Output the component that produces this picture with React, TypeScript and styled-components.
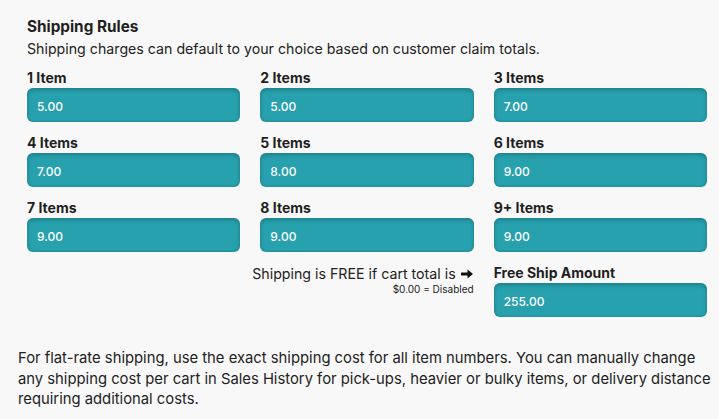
import * as React from "react";
import styled, { createGlobalStyle } from "styled-components";

const GlobalStyle = createGlobalStyle`
  html, body {
    margin: 0;
    padding: 0;
    background: #f8f8f8;
  }
  body {
    font-family: "Inter", "Noto Sans", sans-serif;
    color: #222;
  }
`;

const Page = styled.div`
  width: 719px;
  height: 419px;
  box-sizing: border-box;
  padding: 17px 0 0 18px;
  background: #f8f8f8;
  overflow: hidden;
`;

const Section = styled.section`
  padding-left: 9px;
`;

const Title = styled.h2`
  margin: 0;
  font-size: 15.3px;
  font-weight: 700;
  line-height: 20px;
  color: #1f1f1f;
`;

const Subtitle = styled.p`
  margin: 2px 0 0;
  font-size: 14.2px;
  line-height: 20px;
  color: #222;
`;

const Grid = styled.div`
  width: 680px;
  margin-top: 10px;
  display: grid;
  grid-template-columns: repeat(3, minmax(0, 1fr));
  column-gap: 20px;
  row-gap: 12px;
`;

const Field = styled.div`
  display: flex;
  flex-direction: column;
`;

const FieldLabel = styled.label`
  font-size: 14px;
  font-weight: 700;
  line-height: 18px;
  margin-bottom: 1px;
  color: #1f1f1f;
`;

const AmountInput = styled.input`
  box-sizing: border-box;
  height: 34px;
  width: 100%;
  border: none;
  border-radius: 6px;
  padding: 2px 10px 0;
  background: #27a1ae;
  box-shadow: inset 0 2px 4px rgba(0, 0, 0, 0.22), inset 0 -1px 2px rgba(0, 0, 0, 0.08);
  color: #fff;
  font-family: "Inter", "Noto Sans", sans-serif;
  font-size: 12px;
  font-weight: 500;
  outline: none;
`;

const FreeNote = styled.div`
  grid-column: 2;
  display: flex;
  flex-direction: column;
  align-items: flex-end;
  padding-top: 1px;
`;

const FreeLine = styled.span`
  font-size: 14.2px;
  line-height: 18px;
  color: #222;
  white-space: nowrap;
  display: flex;
  align-items: center;
  gap: 4px;
`;

const FreeHint = styled.span`
  font-size: 10px;
  line-height: 13px;
  color: #222;
  white-space: nowrap;
`;

const Footer = styled.p`
  margin: 31px 0 0;
  width: 700px;
  font-size: 14.8px;
  line-height: 20.5px;
  color: #222;
`;

const Arrow = () => (
  <svg width="14" height="12" viewBox="0 0 14 12" aria-hidden="true">
    <path d="M1 4.5h6.5V1.5L13 6l-5.5 4.5V7.5H1z" fill="#111" />
  </svg>
);

const fields = [
  { label: "1 Item", value: "5.00" },
  { label: "2 Items", value: "5.00" },
  { label: "3 Items", value: "7.00" },
  { label: "4 Items", value: "7.00" },
  { label: "5 Items", value: "8.00" },
  { label: "6 Items", value: "9.00" },
  { label: "7 Items", value: "9.00" },
  { label: "8 Items", value: "9.00" },
  { label: "9+ Items", value: "9.00" },
];

export default function App() {
  return (
    <Page>
      <GlobalStyle />
      <Section>
        <Title>Shipping Rules</Title>
        <Subtitle>Shipping charges can default to your choice based on customer claim totals.</Subtitle>
        <Grid>
          {fields.map((f) => (
            <Field key={f.label}>
              <FieldLabel>{f.label}</FieldLabel>
              <AmountInput defaultValue={f.value} />
            </Field>
          ))}
          <FreeNote>
            <FreeLine>
              Shipping is FREE if cart total is <Arrow />
            </FreeLine>
            <FreeHint>$0.00 = Disabled</FreeHint>
          </FreeNote>
          <Field>
            <FieldLabel>Free Ship Amount</FieldLabel>
            <AmountInput defaultValue="255.00" />
          </Field>
        </Grid>
      </Section>
      <Footer>
        For flat-rate shipping, use the exact shipping cost for all item numbers. You can manually change
        any shipping cost per cart in Sales History for pick-ups, heavier or bulky items, or delivery distance
        requiring additional costs.
      </Footer>
    </Page>
  );
}
